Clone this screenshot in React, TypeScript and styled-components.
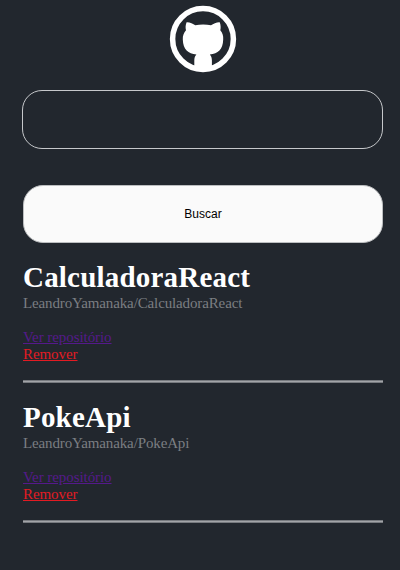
import React from 'react';
import styled, { createGlobalStyle } from 'styled-components';

const GlobalStyle = createGlobalStyle`
  * { box-sizing: border-box; margin: 0; padding: 0; }
  body { background: #22272e; overflow: hidden; }
`;

const Container = styled.main`
  display: flex;
  flex-direction: column;
  min-height: 570px;
  padding: 5px 17px 0 23px;
  background: #22272e;
  font-family: 'Liberation Serif', 'Times New Roman', serif;
`;

const Logo = styled.svg`
  display: block;
  width: 68px;
  height: 68px;
  margin-left: 146px;
`;

const SearchInput = styled.input`
  width: 361px;
  height: 59px;
  margin: 17px -1px 0;
  padding: 0 20px;
  border: 1px solid #c6c8cb;
  border-radius: 20px;
  background: transparent;
  color: #fff;
  font-size: 16px;
  outline: none;
`;

const SearchButton = styled.button`
  width: 100%;
  height: 58px;
  margin-top: 36px;
  border: 1px solid #bcbec0;
  border-radius: 20px;
  background: #fafafa;
  color: #000;
  font: 12px 'Liberation Sans', Arial, sans-serif;
`;

const Repository = styled.article`
  display: flex;
  flex-direction: column;
  align-items: flex-start;
  height: 140px;
  padding-top: 18px;
`;

const Title = styled.h3`
  font-size: 29px;
  line-height: 33px;
  letter-spacing: 0.2px;
  color: #fff;
`;

const FullName = styled.p`
  height: 34px;
  margin-top: 1px;
  font-size: 15px;
  line-height: 17px;
  letter-spacing: -0.13px;
  color: #7b7e82;
`;

const RepoLink = styled.a<{ $danger?: boolean }>`
  font-size: 15px;
  line-height: 17px;
  letter-spacing: -0.07px;
  text-decoration: underline;
  color: ${({ $danger }) => ($danger ? '#e31b23' : '#551a8b')};
`;

const Divider = styled.hr`
  width: 100%;
  height: 3px;
  margin-top: 17px;
  border: solid #777a7f;
  border-width: 1px 0;
  background: #a2a4a8;
`;

const repositories = [
  { name: 'CalculadoraReact', fullName: 'LeandroYamanaka/CalculadoraReact' },
  { name: 'PokeApi', fullName: 'LeandroYamanaka/PokeApi' },
];

export default function App() {
  return (
    <>
      <GlobalStyle />
      <Container>
        <Logo viewBox="0 0 68 68" aria-label="GitHub">
          <circle cx="34" cy="34" r="30.4" fill="none" stroke="#fff" strokeWidth="5.5" />
          <path
            fill="#fff"
            d="M17.6 17.2 C20.5 16.9 24 18.8 26.3 20.3 C31 19.1 37.3 19.1 42 20.3 C44.5 18.7 48 16.9 50.7 17.2 C51.8 19.9 51.9 22.9 51.3 25.2 C53.5 27.7 54.5 30.7 54.2 34.5 C53.9 44.5 49 48.5 40.8 49.6 C42.2 51.1 42.9 53 42.9 55.5 V65 H25.3 V55.5 C25.3 53 26 51.1 27.4 49.6 C19.2 48.5 14.1 44.5 13.8 34.5 C13.6 30.7 14.8 27.7 17 25.2 C16.3 22.7 16.5 19.8 17.6 17.2 Z"
          />
        </Logo>
        <SearchInput aria-label="Repositório" />
        <SearchButton>Buscar</SearchButton>
        {repositories.map((repo) => (
          <Repository key={repo.fullName}>
            <Title>{repo.name}</Title>
            <FullName>{repo.fullName}</FullName>
            <RepoLink href="#">Ver repositório</RepoLink>
            <RepoLink href="#" $danger>Remover</RepoLink>
            <Divider />
          </Repository>
        ))}
      </Container>
    </>
  );
}
